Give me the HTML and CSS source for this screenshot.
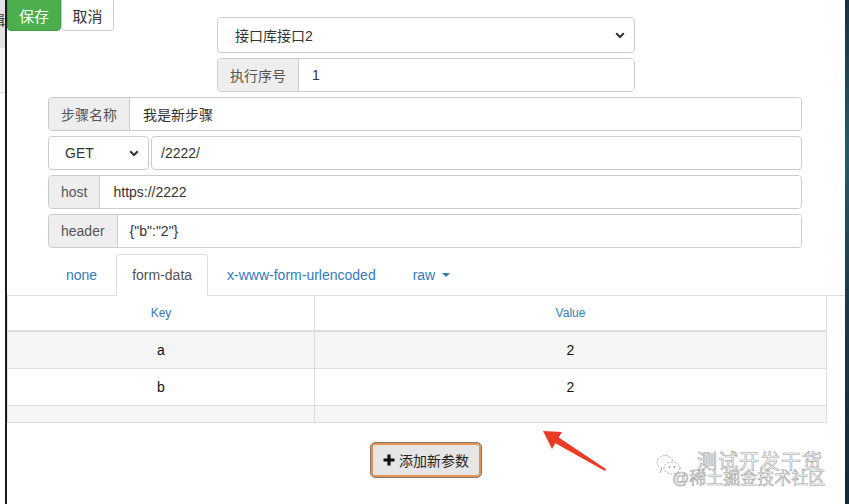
FILE: index.html
```html
<!DOCTYPE html>
<html lang="zh-CN">
<head>
<meta charset="utf-8">
<title>编辑步骤</title>
<link rel="stylesheet" href="styles.css">
</head>
<body>
<div class="screen">
  <div class="bg-left">
    <div class="bg-top"><span class="bg-char">辑</span></div>
    <div class="bg-mid"></div>
  </div>
  <div class="modal">
    <div class="top">
      <div class="actions">
        <button class="btn btn-save">保存</button>
        <button class="btn btn-cancel">取消</button>
      </div>
      <div class="center-stack">
        <div class="select select-wide">
          <span>接口库接口2</span>
          <svg class="chev" width="10" height="7" viewBox="0 0 10 7"><path d="M1.2 1.2 L5 5 L8.8 1.2" fill="none" stroke="#333" stroke-width="2"/></svg>
        </div>
        <div class="igroup">
          <span class="addon">执行序号</span>
          <span class="ival ival-seq">1</span>
        </div>
      </div>
      <div></div>
    </div>

    <div class="form">
      <div class="igroup">
        <span class="addon">步骤名称</span>
        <span class="ival">我是新步骤</span>
      </div>
      <div class="method-row">
        <div class="select select-method">
          <span>GET</span>
          <svg class="chev" width="10" height="7" viewBox="0 0 10 7"><path d="M1.2 1.2 L5 5 L8.8 1.2" fill="none" stroke="#333" stroke-width="2"/></svg>
        </div>
        <span class="ival ival-url">/2222/</span>
      </div>
      <div class="igroup">
        <span class="addon">host</span>
        <span class="ival">https://2222</span>
      </div>
      <div class="igroup">
        <span class="addon">header</span>
        <span class="ival ival-header">{"b":"2"}</span>
      </div>
    </div>

    <div class="tabs">
      <span class="tab">none</span>
      <span class="tab tab-active">form-data</span>
      <span class="tab">x-www-form-urlencoded</span>
      <span class="tab">raw <span class="caret"></span></span>
    </div>

    <table class="params">
      <colgroup><col class="c-key"><col class="c-val"></colgroup>
      <thead>
        <tr><th>Key</th><th>Value</th></tr>
      </thead>
      <tbody>
        <tr class="r-odd"><td>a</td><td>2</td></tr>
        <tr class="r-even"><td>b</td><td>2</td></tr>
        <tr class="r-odd r-empty"><td></td><td></td></tr>
      </tbody>
    </table>

    <div class="add-row">
      <button class="btn btn-add">
        <svg width="12" height="12" viewBox="0 0 12 12"><path d="M4.4 0.5h3.2v3.9h3.9v3.2H7.6v3.9H4.4V7.6H0.5V4.4h3.9z" fill="#111"/></svg>
        <span>添加新参数</span>
      </button>
    </div>

    <svg class="arrow" width="90" height="60" viewBox="0 0 90 60">
      <polygon points="69,41 68,43 18,15 21,9" fill="#ea3b25"/>
      <polygon points="6,3 25,4 15,21" fill="#ea3b25"/>
    </svg>

    <div class="watermark">
      <svg class="wm-icon" width="26" height="24" viewBox="0 0 26 24">
        <ellipse cx="9" cy="9" rx="8" ry="6.5" fill="none" stroke="#aaa" stroke-width="1" stroke-dasharray="2 1.5"/>
        <ellipse cx="16" cy="15" rx="8" ry="6" fill="#fff" stroke="#aaa" stroke-width="1" stroke-dasharray="2 1.5"/>
        <circle cx="13.5" cy="14" r="0.9" fill="#999"/>
        <circle cx="18.5" cy="14" r="0.9" fill="#999"/>
        <path d="M4 20 L6 15" stroke="#aaa" stroke-width="1"/>
      </svg>
      <div class="wm-text">
        <span class="wm-1">测试开发干货</span>
        <span class="wm-2">@稀土掘金技术社区</span>
      </div>
    </div>
  </div>
  <div class="bg-right"></div>
</div>
</body>
</html>
```

FILE: styles.css
```css
* { box-sizing: border-box; }

html, body {
  margin: 0;
  padding: 0;
  width: 849px;
  height: 504px;
  overflow: hidden;
  background: #fff;
  font-family: "Liberation Sans", "Noto Sans CJK SC", Arial, sans-serif;
  font-size: 14px;
  color: #333;
}

.screen {
  display: flex;
  width: 849px;
  height: 504px;
}

/* background page showing at the left edge */
.bg-left {
  width: 7px;
  display: flex;
  flex-direction: column;
  overflow: hidden;
  border-right: 2px solid #1b1b1b;
  flex: none;
}
.bg-top {
  height: 48px;
  background: #e2e2e2;
  overflow: hidden;
}
.bg-char {
  display: block;
  margin-left: -9px;
  margin-top: 12px;
  font-size: 14px;
  color: #333;
  line-height: 16px;
}
.bg-mid {
  height: 45px;
  background: #f6f6f6;
  border-bottom: 1px solid #d8d8d8;
}

.bg-right {
  width: 4px;
  flex: none;
  background: linear-gradient(180deg, #16323f 0%, #2a5a66 30%, #1b3a48 60%, #122a36 100%);
}

.modal {
  flex: 1;
  position: relative;
  background: #fff;
  overflow: hidden;
}

/* top area */
.top {
  display: grid;
  grid-template-columns: 1fr 418px 1fr;
}
.actions {
  display: flex;
  align-items: flex-start;
  margin-top: -4px;
}
.btn {
  font-family: inherit;
  font-size: 14px;
  cursor: pointer;
}
.btn-save {
  width: 54px;
  height: 35px;
  padding-top: 4px;
  background: #4cae4c;
  color: #fff;
  border: 1px solid #449d44;
  border-radius: 4px;
  font-size: 15px;
}
.btn-cancel {
  width: 53px;
  height: 35px;
  padding-top: 4px;
  background: #fff;
  color: #333;
  border: 1px solid #ccc;
  border-radius: 4px;
  font-size: 15px;
}

.center-stack {
  padding-top: 17px;
  display: flex;
  flex-direction: column;
  gap: 5px;
}

.select {
  display: flex;
  align-items: center;
  justify-content: space-between;
  border: 1px solid #ccc;
  border-radius: 4px;
  background: #fff;
  color: #333;
}
.select-wide {
  height: 36px;
  padding: 0 9px 0 17px;
}
.select-method {
  width: 101px;
  height: 34px;
  padding: 0 9px 0 16px;
  flex: none;
}

.igroup {
  display: flex;
  height: 34px;
  border: 1px solid #ccc;
  border-radius: 4px;
  overflow: hidden;
}
.addon {
  display: flex;
  align-items: center;
  padding: 0 12px;
  background: #eee;
  border-right: 1px solid #ccc;
  color: #555;
  flex: none;
}
.ival {
  display: flex;
  align-items: center;
  flex: 1;
  padding-left: 13px;
  color: #333;
  background: #fff;
}
.ival-header { padding-left: 12px; }

.form {
  padding: 5px 43px 0 41px;
  display: flex;
  flex-direction: column;
  gap: 5px;
}
.method-row {
  display: flex;
  gap: 2px;
  height: 34px;
}
.ival-url {
  border: 1px solid #ccc;
  border-radius: 4px;
  padding-left: 9px;
}

/* tabs */
.tabs {
  margin-top: 6px;
  padding-left: 41px;
  display: flex;
  height: 42px;
  border-bottom: 1px solid #ddd;
}
.tab {
  display: flex;
  align-items: center;
  padding: 0 16px 0 17px;
  margin-right: 2px;
  color: #337ab7;
  border: 1px solid transparent;
  border-radius: 4px 4px 0 0;
  height: 42px;
  white-space: nowrap;
}
.tab-active {
  color: #555;
  border-color: #ddd;
  border-bottom-color: #fff;
  background: #fff;
  padding: 0 15px;
  margin-right: 1px;
}
.caret {
  display: inline-block;
  margin-left: 7px;
  width: 0;
  height: 0;
  border-left: 4px solid transparent;
  border-right: 4px solid transparent;
  border-top: 4px solid #337ab7;
}

/* table */
.params {
  width: 820px;
  border-collapse: collapse;
  border: 1px solid #ddd;
  border-top: none;
}
.c-key { width: 307px; }
.params th {
  height: 35px;
  font-size: 12px;
  font-weight: normal;
  color: #337ab7;
  border-bottom: 2px solid #ddd;
  border-right: 1px solid #ddd;
  text-align: center;
}
.params td {
  height: 37px;
  text-align: center;
  color: #111;
  border-top: 1px solid #ddd;
  border-right: 1px solid #ddd;
}
.r-odd td { background: #f5f5f5; }
.r-even td { background: #fff; }
.r-empty td { height: 17px; }

.add-row {
  display: flex;
  justify-content: center;
  padding-top: 20px;
}
.btn-add {
  display: flex;
  align-items: center;
  gap: 4px;
  height: 34px;
  width: 110px;
  padding: 0 0 0 10px;
  background: #e6e6e6;
  color: #222;
  border: 2px solid #e9924c;
  border-radius: 4px;
  outline: 1px solid #7a7a7a;
  outline-offset: 0;
  font-size: 14px;
}
.btn-add svg { flex: none; }

/* annotation arrow */
.arrow {
  position: absolute;
  left: 530px;
  top: 428px;
}

/* watermark */
.watermark {
  position: absolute;
  left: 649px;
  top: 452px;
  display: flex;
  align-items: flex-start;
}
.wm-icon { margin-top: 1px; }
.wm-text {
  display: flex;
  flex-direction: column;
  margin-left: 15px;
}
.wm-1, .wm-2 {
  color: rgba(255,255,255,0.9);
  -webkit-text-stroke: 0.6px #a0a0a0;
  white-space: nowrap;
}
.wm-1 {
  font-size: 20px;
  line-height: 20px;
  letter-spacing: 1px;
}
.wm-2 {
  font-size: 17px;
  line-height: 17px;
  margin-left: -25px;
  margin-top: -2px;
}
```
